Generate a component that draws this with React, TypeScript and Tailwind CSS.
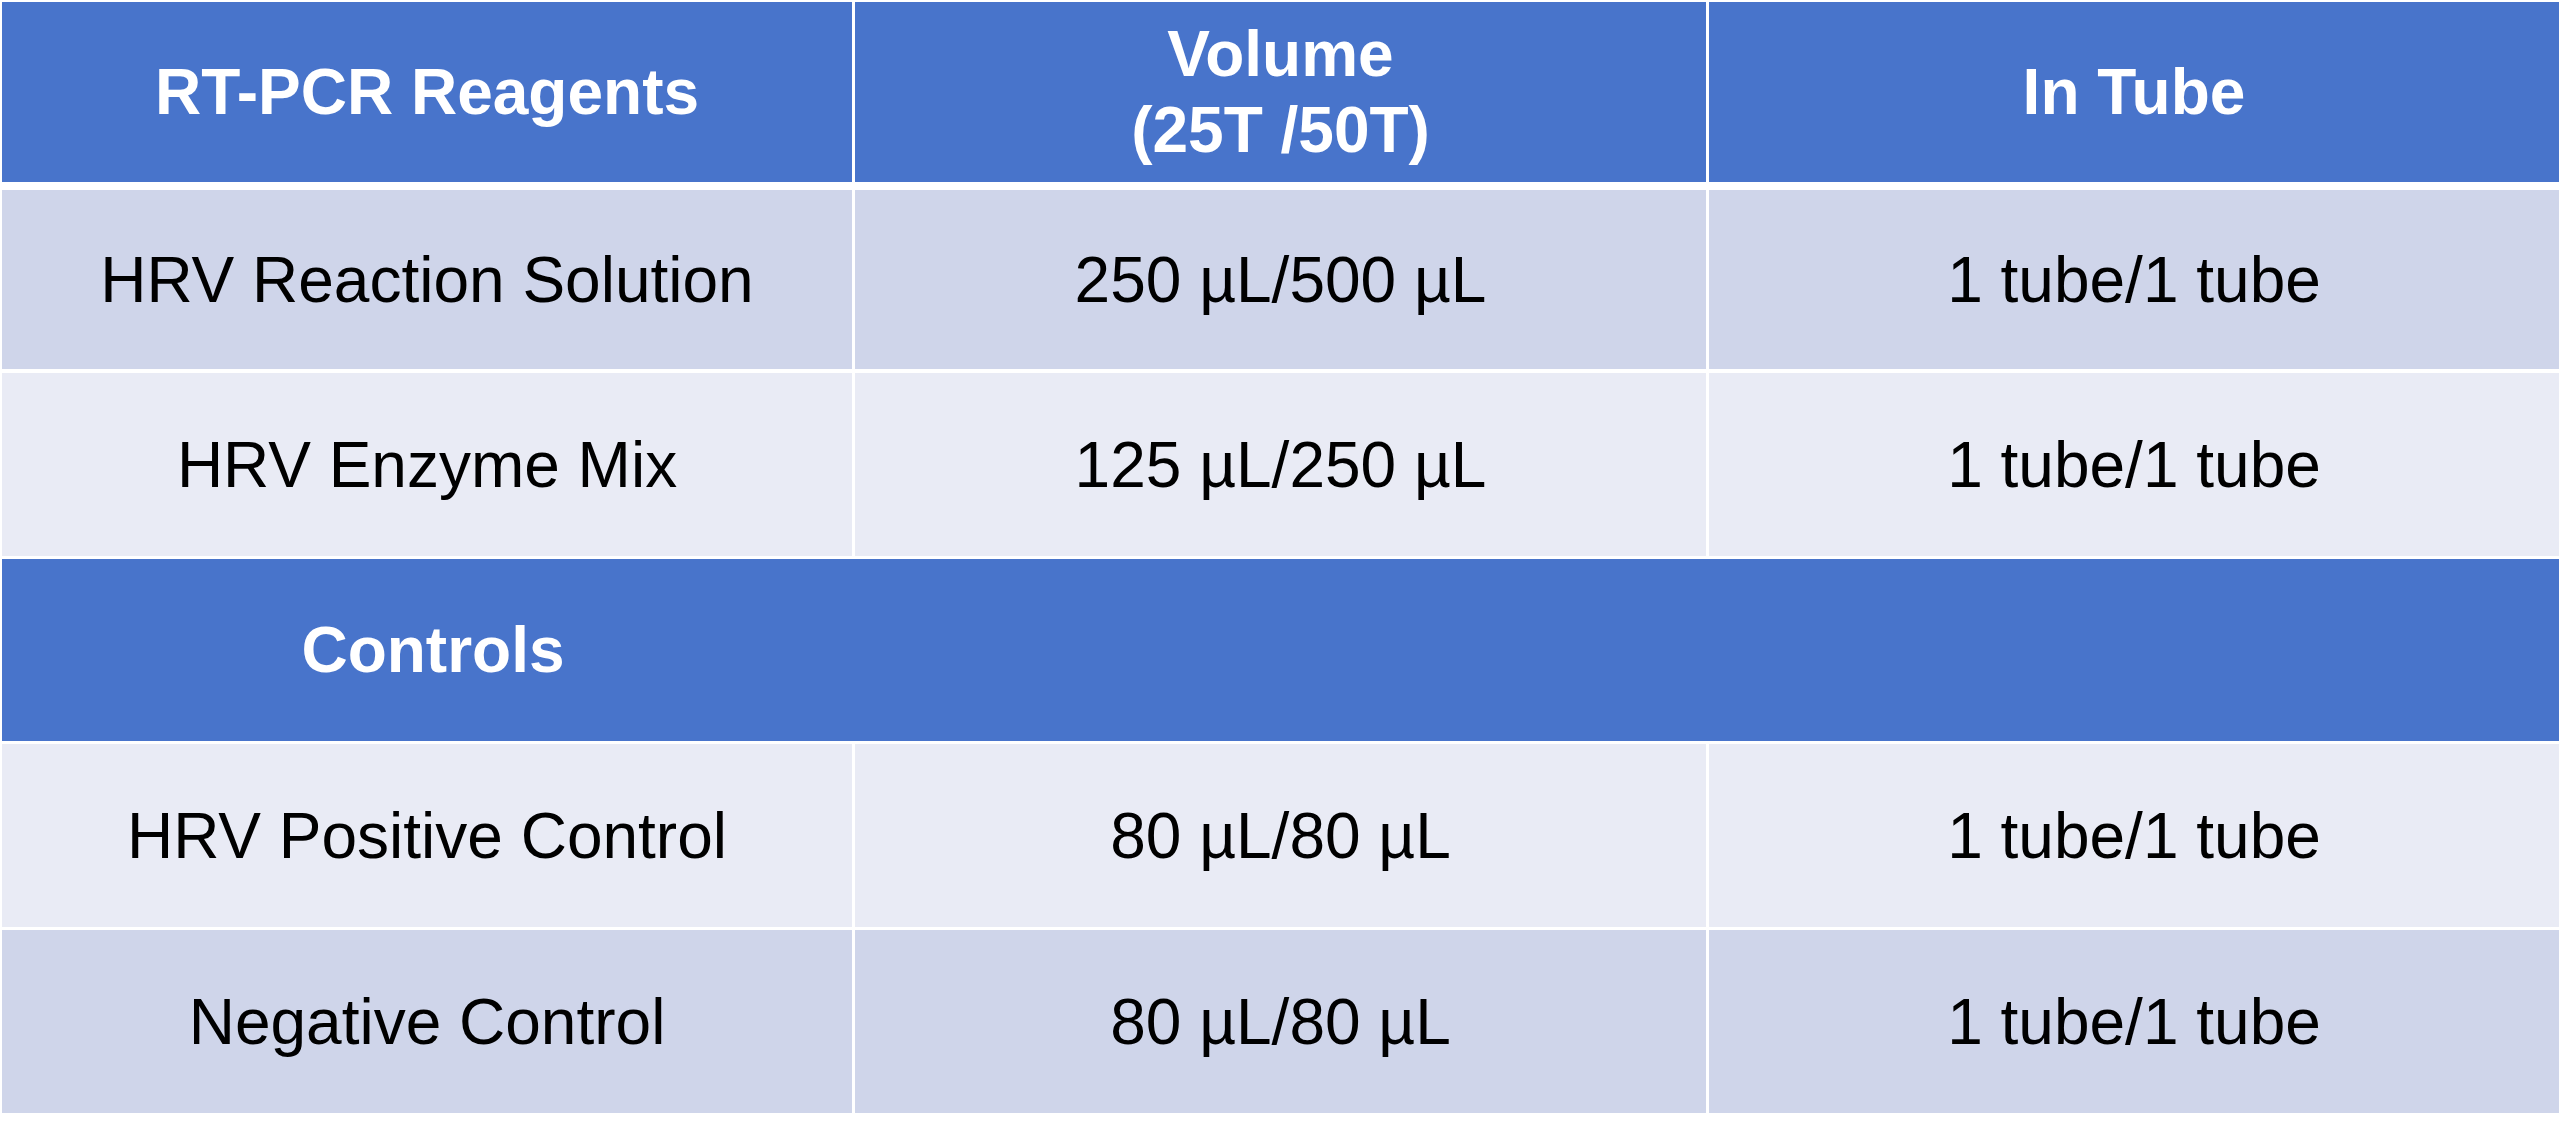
const BLUE = "bg-[#4874cb]";

type Row = {
  cells: string[];
  bg: string;
  h: string;
  mt: string;
};

const rows: Row[] = [
  { cells: ["HRV Reaction Solution", "250 µL/500 µL", "1 tube/1 tube"], bg: "bg-[#cfd5ea]", h: "h-[179px]", mt: "mt-[8px]" },
  { cells: ["HRV Enzyme Mix", "125 µL/250 µL", "1 tube/1 tube"], bg: "bg-[#e9ebf5]", h: "h-[183px]", mt: "mt-[4px]" },
];

const controls: Row[] = [
  { cells: ["HRV Positive Control", "80 µL/80 µL", "1 tube/1 tube"], bg: "bg-[#e9ebf5]", h: "h-[183px]", mt: "mt-[3px]" },
  { cells: ["Negative Control", "80 µL/80 µL", "1 tube/1 tube"], bg: "bg-[#cfd5ea]", h: "h-[183px]", mt: "mt-[3px]" },
];

const cols = "grid grid-cols-[850px_851px_850px] gap-x-[3px]";

const BodyRow = ({ row }: { row: Row }) => (
  <div className={`${cols} ${row.h} ${row.mt}`}>
    {row.cells.map((c, i) => (
      <div key={i} className={`${row.bg} flex items-center justify-center text-black`}>
        {c}
      </div>
    ))}
  </div>
);

export default function App() {
  return (
    <div
      className="w-[2560px] h-[1123px] bg-white pt-[2px] pl-[2px] text-[64px] leading-[76px] overflow-hidden"
      style={{ fontFamily: '"Liberation Sans", Arial, sans-serif' }}
    >
      {/* header */}
      <div className={`${cols} h-[180px] font-bold text-white`}>
        <div className={`${BLUE} flex items-center justify-center`}>RT-PCR Reagents</div>
        <div className={`${BLUE} flex flex-col items-center justify-center text-center`}>
          <span>Volume</span>
          <span>(25T /50T)</span>
        </div>
        <div className={`${BLUE} flex items-center justify-center`}>In Tube</div>
      </div>

      {rows.map((r, i) => (
        <BodyRow key={i} row={r} />
      ))}

      {/* controls section bar */}
      <div className={`${BLUE} mt-[3px] h-[182px] w-[2557px] flex items-center font-bold text-white`}>
        <div className="w-[850px] flex justify-center pl-[12px]">Controls</div>
      </div>

      {controls.map((r, i) => (
        <BodyRow key={i} row={r} />
      ))}
    </div>
  );
}
